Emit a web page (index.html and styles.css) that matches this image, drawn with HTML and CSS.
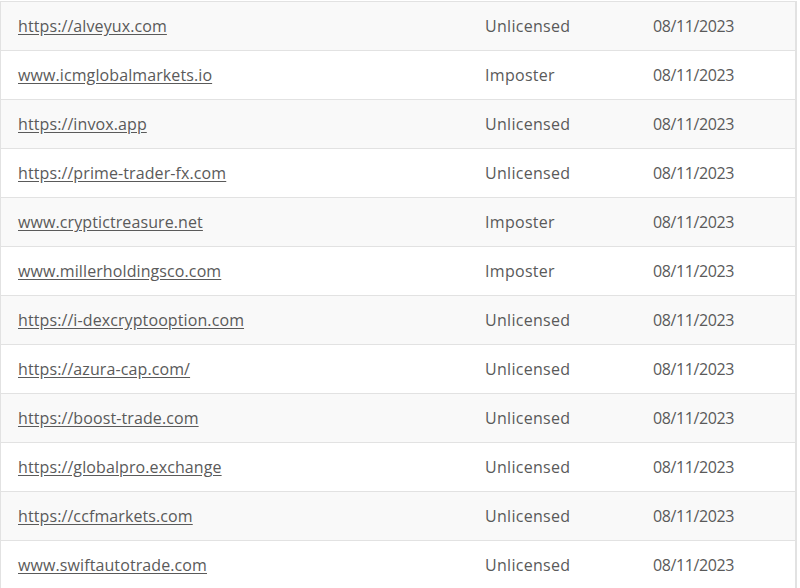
FILE: index.html
```html
<!DOCTYPE html>
<html>
<head>
<meta charset="utf-8">
<link rel="stylesheet" href="styles.css">
</head>
<body>
<table class="list">
<tbody>
<tr><td class="site"><a href="#">https://alveyux.com</a></td><td class="status">Unlicensed</td><td class="date">08/11/2023</td></tr>
<tr><td class="site"><a href="#">www.icmglobalmarkets.io</a></td><td class="status">Imposter</td><td class="date">08/11/2023</td></tr>
<tr><td class="site"><a href="#">https://invox.app</a></td><td class="status">Unlicensed</td><td class="date">08/11/2023</td></tr>
<tr><td class="site"><a href="#">https://prime-trader-fx.com</a></td><td class="status">Unlicensed</td><td class="date">08/11/2023</td></tr>
<tr><td class="site"><a href="#">www.cryptictreasure.net</a></td><td class="status">Imposter</td><td class="date">08/11/2023</td></tr>
<tr><td class="site"><a href="#">www.millerholdingsco.com</a></td><td class="status">Imposter</td><td class="date">08/11/2023</td></tr>
<tr><td class="site"><a href="#">https://i-dexcryptooption.com</a></td><td class="status">Unlicensed</td><td class="date">08/11/2023</td></tr>
<tr><td class="site"><a href="#">https://azura-cap.com/</a></td><td class="status">Unlicensed</td><td class="date">08/11/2023</td></tr>
<tr><td class="site"><a href="#">https://boost-trade.com</a></td><td class="status">Unlicensed</td><td class="date">08/11/2023</td></tr>
<tr><td class="site"><a href="#">https://globalpro.exchange</a></td><td class="status">Unlicensed</td><td class="date">08/11/2023</td></tr>
<tr><td class="site"><a href="#">https://ccfmarkets.com</a></td><td class="status">Unlicensed</td><td class="date">08/11/2023</td></tr>
<tr><td class="site"><a href="#">www.swiftautotrade.com</a></td><td class="status">Unlicensed</td><td class="date">08/11/2023</td></tr>
</tbody>
</table>
</body>
</html>
```
FILE: styles.css
```css
html, body {
  margin: 0;
  padding: 0;
  background: #ffffff;
}
body {
  padding: 1px 3px 0 0;
  font-family: "Open Sans", "DejaVu Sans", sans-serif;
  font-size: 16px;
  color: #5a5a5a;
}
.list {
  width: 797px;
  border-collapse: collapse;
  border: 1px solid #e2e2e2;
  border-right-width: 2px;
}
.list tr {
  height: 49px;
  border-bottom: 1px solid #e2e2e2;
}
.list tr:nth-child(odd) {
  background: #f9f9f9;
}
.list td {
  padding: 0 0 0 17px;
  vertical-align: middle;
}
.site {
  width: 450px;
  letter-spacing: 0.1px;
}
.status {
  width: 151px;
  letter-spacing: 0.3px;
}
.date {
  letter-spacing: -0.4px;
}
.site a {
  color: #5a5a5a;
  text-decoration: underline;
  text-underline-offset: 2px;
}
```
